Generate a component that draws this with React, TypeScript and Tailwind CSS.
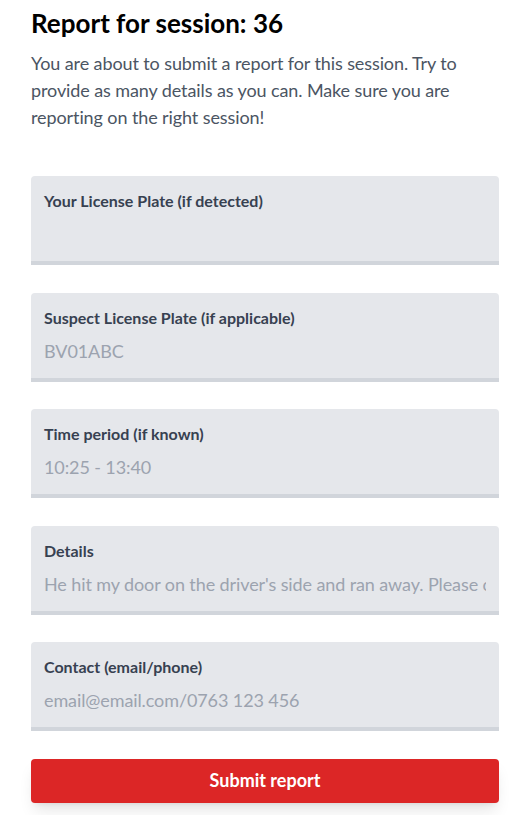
import React from "react";

const fields = [
  { label: "Your License Plate (if detected)", placeholder: "" },
  { label: "Suspect License Plate (if applicable)", placeholder: "BV01ABC" },
  { label: "Time period (if known)", placeholder: "10:25 - 13:40" },
  { label: "Details", placeholder: "He hit my door on the driver's side and ran away. Please contact me." },
  { label: "Contact (email/phone)", placeholder: "email@email.com/0763 123 456" },
];

export default function App() {
  return (
    <div className="min-h-[815px] bg-white" style={{ fontFamily: "Lato, 'Noto Sans', sans-serif" }}>
      <div className="ml-[31px] w-[468px] pt-[6px]">
        <h1 className="text-[26px] leading-[34px] font-bold text-black">Report for session: 36</h1>
        <p className="mt-[10px] text-[18px] leading-[27px] text-[#4b5563] tracking-[-0.1px]">
          You are about to submit a report for this session. Try to provide as many details as you can. Make sure you are reporting on the right session!
        </p>
        <div className="mt-[45px] flex flex-col gap-[27.5px]">
          {fields.map((f) => (
            <div key={f.label} className="h-[89px] rounded-t-[4px] bg-[#e5e7eb] border-b-4 border-[#d1d5db] px-[13px] pt-[14px]">
              <div className="text-[16px] leading-[21px] font-bold text-[#374151]">{f.label}</div>
              <input
                readOnly
                placeholder={f.placeholder}
                className="mt-[9px] block w-full bg-transparent text-[18px] leading-[28px] h-[28px] text-[#374151] placeholder:text-[#9ca3af] outline-none tracking-[-0.1px]"
                style={{ fontFamily: "Lato, 'Noto Sans', sans-serif" }}
              />
            </div>
          ))}
          <button className="h-[44px] w-full rounded-[4px] bg-[#dc2626] text-white text-[18px] font-bold shadow-lg" style={{ fontFamily: "Lato, 'Noto Sans', sans-serif" }}>
            Submit report
          </button>
        </div>
      </div>
    </div>
  );
}
